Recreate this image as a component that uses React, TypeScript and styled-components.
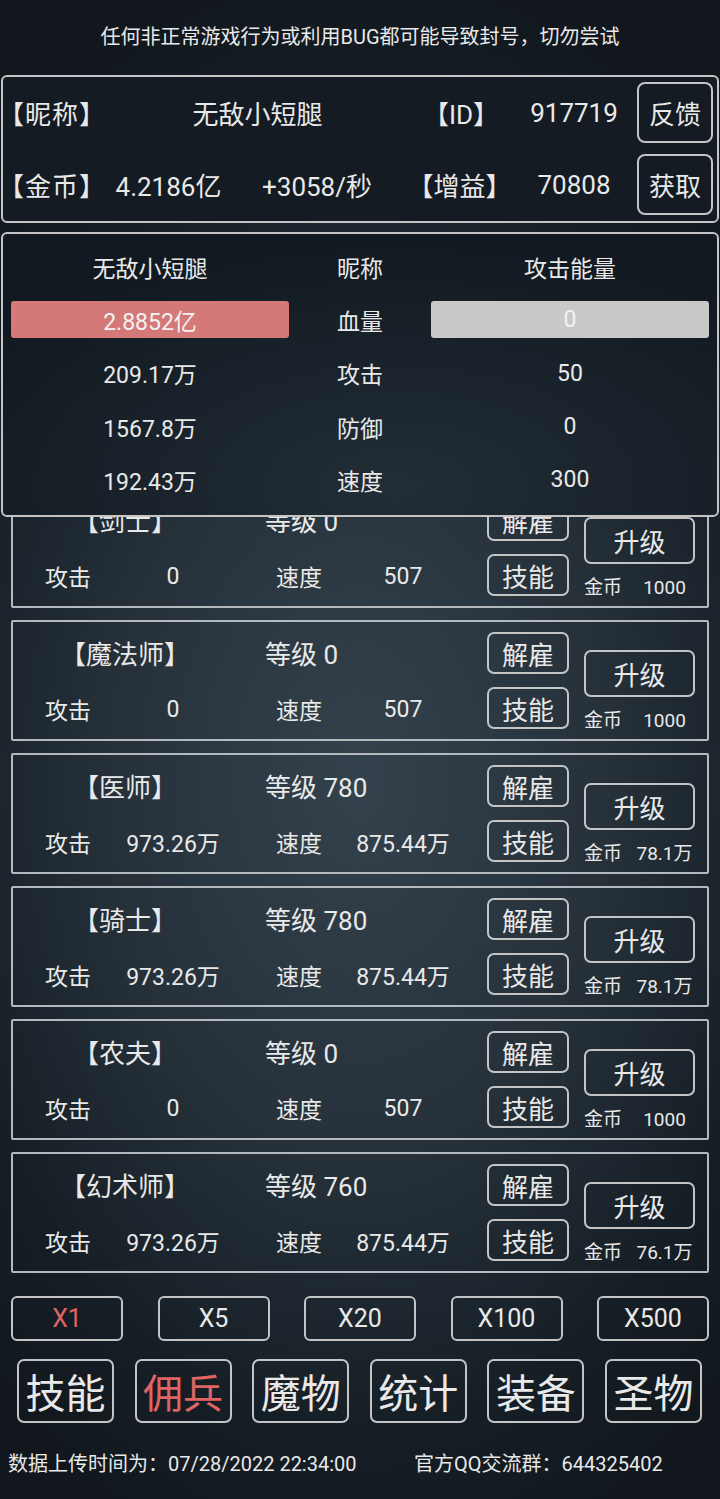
import React from 'react';
import styled, { createGlobalStyle } from 'styled-components';

const GlobalStyle = createGlobalStyle`
    html, body {
        margin: 0;
        padding: 0;
    }
    body {
        background: #131a20;
        font-family: Roboto, "Noto Sans CJK SC", sans-serif;
        color: #e9e9e9;
    }
`;

interface Mercenary {
    name: string;
    level: number;
    attack: string;
    speed: string;
    cost: string;
}

const mercenaries: Mercenary[] = [
    { name: '【剑士】', level: 0, attack: '0', speed: '507', cost: '1000' },
    { name: '【魔法师】', level: 0, attack: '0', speed: '507', cost: '1000' },
    { name: '【医师】', level: 780, attack: '973.26万', speed: '875.44万', cost: '78.1万' },
    { name: '【骑士】', level: 780, attack: '973.26万', speed: '875.44万', cost: '78.1万' },
    { name: '【农夫】', level: 0, attack: '0', speed: '507', cost: '1000' },
    { name: '【幻术师】', level: 760, attack: '973.26万', speed: '875.44万', cost: '76.1万' },
];

const battleRows = [
    { left: '2.8852亿', label: '血量', right: '0', bar: true },
    { left: '209.17万', label: '攻击', right: '50' },
    { left: '1567.8万', label: '防御', right: '0' },
    { left: '192.43万', label: '速度', right: '300' },
];

const multipliers = ['X1', 'X5', 'X20', 'X100', 'X500'];
const tabs = ['技能', '佣兵', '魔物', '统计', '装备', '圣物'];

export default function App() {
    return (
        <>
            <GlobalStyle />
            <Page>
                <Notice>任何非正常游戏行为或利用BUG都可能导致封号，切勿尝试</Notice>

                <InfoBox>
                    <InfoRow $cols="102px 305px 102px 124px 1px 76px">
                        <InfoLabel>【昵称】</InfoLabel>
                        <InfoCell>无敌小短腿</InfoCell>
                        <InfoCell>【ID】</InfoCell>
                        <InfoCell>917719</InfoCell>
                        <span />
                        <InfoButton>反馈</InfoButton>
                    </InfoRow>
                    <InfoRow $cols="102px 127px 170px 115px 114px 6px 76px">
                        <InfoLabel>【金币】</InfoLabel>
                        <InfoCell>4.2186亿</InfoCell>
                        <InfoCell>+3058/秒</InfoCell>
                        <InfoCell>【增益】</InfoCell>
                        <InfoCell>70808</InfoCell>
                        <span />
                        <InfoButton>获取</InfoButton>
                    </InfoRow>
                </InfoBox>

                <Stage>
                    <BattlePanel>
                        <BattleRow>
                            <BattleCell>无敌小短腿</BattleCell>
                            <BattleCell>昵称</BattleCell>
                            <BattleCell>攻击能量</BattleCell>
                        </BattleRow>
                        {battleRows.map((row) => (
                            <BattleRow key={row.label}>
                                {row.bar ? <Bar $color="#d47878">{row.left}</Bar> : <BattleCell>{row.left}</BattleCell>}
                                <BattleCell>{row.label}</BattleCell>
                                {row.bar ? <Bar $color="#c9c9c9">{row.right}</Bar> : <BattleCell>{row.right}</BattleCell>}
                            </BattleRow>
                        ))}
                    </BattlePanel>

                    <CardList>
                        {mercenaries.map((m) => (
                            <Card key={m.name}>
                                <Stats>
                                    <NameRow>
                                        <Name>{m.name}</Name>
                                        <Level>等级 {m.level}</Level>
                                    </NameRow>
                                    <StatRow>
                                        <StatCell>攻击</StatCell>
                                        <StatCell>{m.attack}</StatCell>
                                        <StatCell $shift={22}>速度</StatCell>
                                        <StatCell>{m.speed}</StatCell>
                                    </StatRow>
                                </Stats>
                                <Actions>
                                    <SmallButton>解雇</SmallButton>
                                    <SmallButton>技能</SmallButton>
                                </Actions>
                                <Upgrade>
                                    <UpgradeButton>升级</UpgradeButton>
                                    <Cost>
                                        <span>金币</span>
                                        <CostValue>{m.cost}</CostValue>
                                    </Cost>
                                </Upgrade>
                            </Card>
                        ))}
                    </CardList>
                </Stage>

                <MultiplierRow>
                    {multipliers.map((x, i) => (
                        <MultiplierButton key={x} $active={i === 0}>{x}</MultiplierButton>
                    ))}
                </MultiplierRow>

                <TabRow>
                    {tabs.map((t, i) => (
                        <TabButton key={t} $active={i === 1}>{t}</TabButton>
                    ))}
                </TabRow>

                <Footer>
                    <span>数据上传时间为：07/28/2022 22:34:00</span>
                    <span>官方QQ交流群：644325402</span>
                </Footer>
            </Page>
        </>
    );
}

const Page = styled.div`
    width: 720px;
    min-height: 1499px;
    display: flex;
    flex-direction: column;
    background: radial-gradient(ellipse 75% 55% at 50% 52%, #34424d 0%, #26313a 45%, #161e25 80%, #11171d 100%);
`;

const Notice = styled.div`
    height: 75px;
    line-height: 75px;
    text-align: center;
    font-size: 20px;
`;

const InfoBox = styled.div`
    margin: 0 1px;
    height: 148px;
    box-sizing: border-box;
    border: 2px solid #c4c4c4;
    border-radius: 6px;
    background: #141b22;
    display: grid;
    grid-template-rows: 71px 73px;
`;

const InfoRow = styled.div<{ $cols: string }>`
    display: grid;
    grid-template-columns: ${(p) => p.$cols};
    align-items: center;
    font-size: 26px;
    white-space: nowrap;
`;

const InfoLabel = styled.div`
    margin-left: -5px;
    letter-spacing: 1px;
`;

const InfoCell = styled.div`
    text-align: center;
`;

const InfoButton = styled.div`
    height: 61px;
    box-sizing: border-box;
    border: 2px solid #c4c4c4;
    border-radius: 8px;
    display: flex;
    align-items: center;
    justify-content: center;
    font-size: 26px;
`;

const Stage = styled.div`
    position: relative;
    margin-top: 9px;
`;

const BattlePanel = styled.div`
    position: absolute;
    top: 0;
    left: 1px;
    right: 1px;
    z-index: 2;
    height: 285px;
    box-sizing: border-box;
    border: 2px solid #c4c4c4;
    border-radius: 6px;
    background: radial-gradient(ellipse 70% 90% at 55% 90%, #222d36 0%, #19222a 55%, #121920 100%);
    padding: 6px 8px 0;
    display: flex;
    flex-direction: column;
`;

const BattleRow = styled.div`
    display: grid;
    grid-template-columns: 278px 1fr 278px;
    align-items: center;
    height: 53.3px;
    font-size: 23px;
`;

const BattleCell = styled.div`
    text-align: center;
`;

const Bar = styled.div<{ $color: string }>`
    height: 37px;
    border-radius: 3px;
    background: ${(p) => p.$color};
    color: #f2f2f2;
    display: flex;
    align-items: center;
    justify-content: center;
`;

const CardList = styled.div`
    padding: 255px 11px 0;
    display: flex;
    flex-direction: column;
    gap: 12px;
`;

const Card = styled.div`
    height: 121px;
    box-sizing: border-box;
    border: 2px solid #b4b9bd;
    border-radius: 2px;
    display: flex;
`;

const Stats = styled.div`
    width: 474px;
    padding-top: 9px;
    display: flex;
    flex-direction: column;
    gap: 15px;
`;

const NameRow = styled.div`
    height: 42px;
    display: grid;
    grid-template-columns: 224px 1fr;
    align-items: center;
    font-size: 26px;
    white-space: nowrap;
`;

const Name = styled.div`
    text-align: center;
`;

const Level = styled.div`
    padding-left: 28px;
`;

const StatRow = styled.div`
    height: 42px;
    display: grid;
    grid-template-columns: 110px 100px 130px 100px;
    align-items: center;
    font-size: 23px;
    white-space: nowrap;
`;

const StatCell = styled.div<{ $shift?: number }>`
    text-align: center;
    padding-left: ${(p) => p.$shift ?? 0}px;
`;

const Actions = styled.div`
    width: 82px;
    padding-top: 10px;
    display: flex;
    flex-direction: column;
    gap: 13px;
`;

const SmallButton = styled.div`
    height: 42px;
    box-sizing: border-box;
    border: 2px solid #c4c4c4;
    border-radius: 7px;
    display: flex;
    align-items: center;
    justify-content: center;
    font-size: 26px;
`;

const Upgrade = styled.div`
    width: 111px;
    margin-left: 15px;
    padding-top: 28px;
    display: flex;
    flex-direction: column;
`;

const UpgradeButton = styled(SmallButton)`
    height: 47px;
`;

const Cost = styled.div`
    margin-top: 12px;
    display: flex;
    align-items: center;
    font-size: 19px;
    line-height: 24px;
    white-space: nowrap;
`;

const CostValue = styled.span`
    flex: 1;
    text-align: center;
    padding-left: 12px;
`;

const MultiplierRow = styled.div`
    margin-top: 23px;
    padding: 0 11px;
    display: flex;
    justify-content: space-between;
`;

const MultiplierButton = styled.div<{ $active?: boolean }>`
    width: 112px;
    height: 45px;
    box-sizing: border-box;
    border: 2px solid #c4c4c4;
    border-radius: 6px;
    display: flex;
    align-items: center;
    justify-content: center;
    font-size: 25px;
    color: ${(p) => (p.$active ? '#e06464' : '#e9e9e9')};
`;

const TabRow = styled.div`
    margin-top: 18px;
    padding: 0 18px 0 17px;
    display: flex;
    justify-content: space-between;
`;

const TabButton = styled.div<{ $active?: boolean }>`
    width: 97px;
    height: 64px;
    box-sizing: border-box;
    border: 2px solid #c4c4c4;
    border-radius: 7px;
    display: flex;
    align-items: center;
    justify-content: center;
    font-size: 40px;
    color: ${(p) => (p.$active ? '#e06464' : '#e9e9e9')};
`;

const Footer = styled.div`
    margin-top: 25px;
    padding-left: 8px;
    height: 26px;
    display: grid;
    grid-template-columns: 406px 1fr;
    align-items: center;
    font-size: 20px;
    white-space: nowrap;
`;
